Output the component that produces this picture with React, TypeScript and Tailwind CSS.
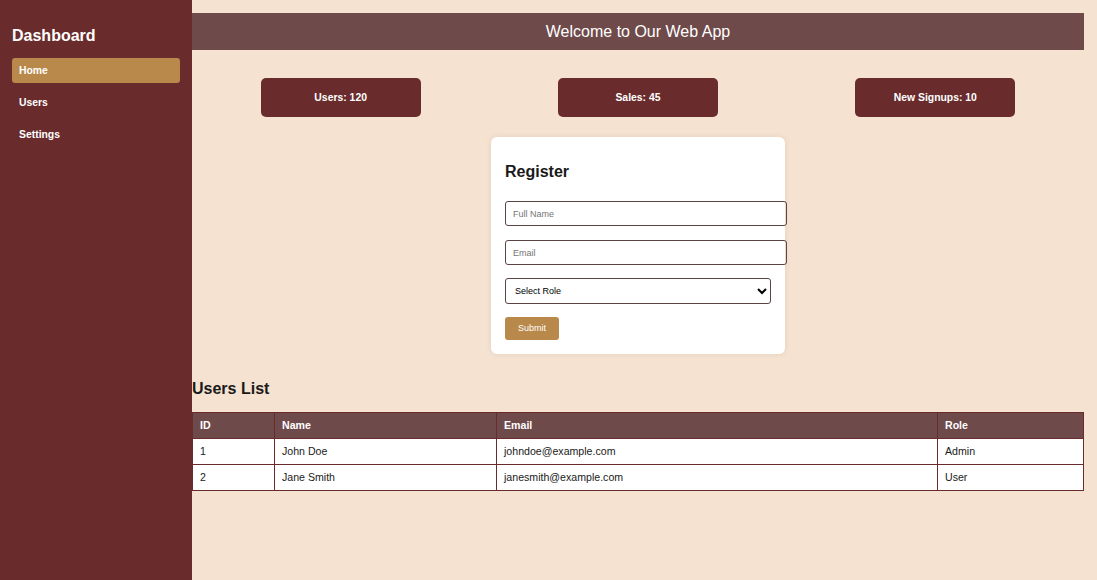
export default function App() {
  const stats = [
    { label: "Users", value: 120 },
    { label: "Sales", value: 45 },
    { label: "New Signups", value: 10 },
  ];
  const users = [
    { id: 1, name: "John Doe", email: "johndoe@example.com", role: "Admin" },
    { id: 2, name: "Jane Smith", email: "janesmith@example.com", role: "User" },
  ];

  return (
    <div className="flex min-h-screen bg-[#f5e2d0] font-['Liberation_Sans',Arial,sans-serif] text-[#1a1a1a]">
      <aside className="w-[192px] shrink-0 bg-[#692b2b] px-[12px] pt-[26px] text-white">
        <h2 className="text-[16px] font-bold leading-[20px]">Dashboard</h2>
        <nav className="mt-[12px] flex flex-col gap-[7px]">
          <a className="h-[25px] rounded-[3px] bg-[#b8894a] px-[7px] text-[10.4px] font-bold leading-[25px]">
            Home
          </a>
          <a className="h-[25px] px-[7px] text-[10.4px] font-bold leading-[25px]">Users</a>
          <a className="h-[25px] px-[7px] text-[10.4px] font-bold leading-[25px]">Settings</a>
        </nav>
      </aside>

      <main className="flex-1 pt-[13px] pr-[13px]">
        <header className="flex h-[37px] items-center justify-center bg-[#6f4a4a] text-[16px] text-white">
          Welcome to Our Web App
        </header>

        <div className="mt-[28px] flex justify-around">
          {stats.map((s) => (
            <div
              key={s.label}
              className="flex h-[39px] w-[160px] items-center justify-center rounded-[5px] bg-[#692b2b] text-[10.4px] font-bold text-white"
            >
              {s.label}: {s.value}
            </div>
          ))}
        </div>

        <div className="mx-auto mt-[20px] w-[294px] rounded-[6px] bg-white px-[14px] pb-[14px] pt-[25px] shadow-[0_0_6px_rgba(0,0,0,0.08)]">
          <h3 className="text-[16px] font-bold leading-[20px]">Register</h3>
          <input
            placeholder="Full Name"
            className="mt-[19px] box-content block h-[23px] w-full rounded-[3px] border border-[#5a4444] px-[7px] text-[9px] outline-none placeholder:text-[#757575]"
          />
          <input
            placeholder="Email"
            className="mt-[14px] box-content block h-[23px] w-full rounded-[3px] border border-[#5a4444] px-[7px] text-[9px] outline-none placeholder:text-[#757575]"
          />
          <select className="mt-[13px] block h-[26px] w-full rounded-[3px] border border-[#5a4444] bg-white px-[5px] text-[9px] text-black outline-none">
            <option>Select Role</option>
            <option>Admin</option>
            <option>User</option>
          </select>
          <button className="mt-[13px] h-[23px] w-[54px] rounded-[3px] bg-[#b8894a] text-[9px] text-white">
            Submit
          </button>
        </div>

        <h3 className="mt-[25px] text-[16px] font-bold leading-[20px]">Users List</h3>
        <table className="mt-[13px] w-full border-collapse text-[10.6px]">
          <thead>
            <tr className="h-[26px] bg-[#6f4a4a] text-left text-white">
              <th className="w-[82px] border border-[#692b2b] px-[7px] font-bold">ID</th>
              <th className="w-[222px] border border-[#692b2b] px-[7px] font-bold">Name</th>
              <th className="w-[441px] border border-[#692b2b] px-[7px] font-bold">Email</th>
              <th className="border border-[#692b2b] px-[7px] font-bold">Role</th>
            </tr>
          </thead>
          <tbody>
            {users.map((u) => (
              <tr key={u.id} className="h-[26px] bg-white">
                <td className="border border-[#692b2b] px-[7px]">{u.id}</td>
                <td className="border border-[#692b2b] px-[7px]">{u.name}</td>
                <td className="border border-[#692b2b] px-[7px]">{u.email}</td>
                <td className="border border-[#692b2b] px-[7px]">{u.role}</td>
              </tr>
            ))}
          </tbody>
        </table>
      </main>
    </div>
  );
}
